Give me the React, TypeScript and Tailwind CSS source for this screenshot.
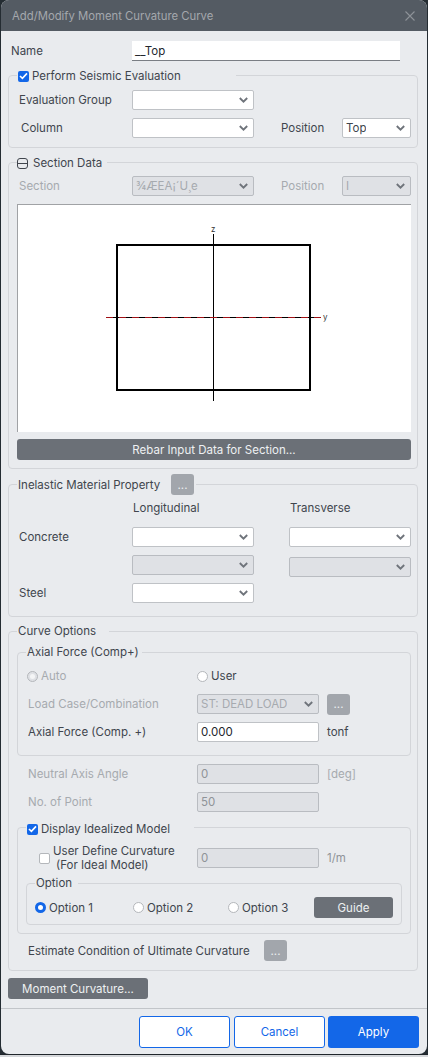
import React from "react";

const Chevron = () => (
  <svg width="9" height="6" viewBox="0 0 9 6" className="shrink-0">
    <path d="M0.8 1 L4.5 4.6 L8.2 1" fill="none" stroke="#6f747b" strokeWidth="1.9" />
  </svg>
);

function Select({ w = "w-[122px]", value = "", disabled = false }: { w?: string; value?: string; disabled?: boolean }) {
  return (
    <div
      className={`${w} h-[20px] shrink-0 flex items-center justify-between pl-[3px] pr-[5px] rounded-[2px] border ${
        disabled ? "bg-[#dfe1e5] border-[#b9bcc1] text-[#a6aaaf]" : "bg-white border-[#bfc2c6] text-[#40454d]"
      }`}
    >
      <span className="whitespace-nowrap overflow-hidden">{value}</span>
      <Chevron />
    </div>
  );
}

function Input({ value, disabled = false }: { value: string; disabled?: boolean }) {
  return (
    <div
      className={`w-[122px] h-[20px] shrink-0 flex items-center pl-[3px] rounded-[2px] border ${
        disabled ? "bg-[#dfe1e5] border-[#b9bcc1] text-[#8f9398]" : "bg-white border-[#bfc2c6] text-[#23272d]"
      }`}
    >
      {value}
    </div>
  );
}

const Check = ({ on = true }: { on?: boolean }) =>
  on ? (
    <span className="w-[11px] h-[11px] shrink-0 rounded-[2px] bg-[#1367e8] flex items-center justify-center">
      <svg width="9" height="8" viewBox="0 0 9 8">
        <path d="M1 4 L3.4 6.4 L8 1.4" fill="none" stroke="white" strokeWidth="1.6" />
      </svg>
    </span>
  ) : (
    <span className="w-[11px] h-[11px] shrink-0 rounded-[2px] bg-white border border-[#b4b7bb]" />
  );

const Radio = ({ state = "off" }: { state?: "off" | "on" | "disabled" }) => {
  if (state === "on")
    return <span className="w-[11px] h-[11px] shrink-0 rounded-full bg-white border-[3px] border-[#1367e8]" />;
  if (state === "disabled")
    return (
      <span className="w-[11px] h-[11px] shrink-0 rounded-full bg-[#dfe1e5] border border-[#b4b7bb] flex items-center justify-center">
        <span className="w-[5px] h-[5px] rounded-full bg-[#f4f5f6]" />
      </span>
    );
  return <span className="w-[11px] h-[11px] shrink-0 rounded-full bg-white border border-[#b4b7bb]" />;
};

const Dots = ({ cls = "" }: { cls?: string }) => (
  <div className={`w-[23px] h-[21px] shrink-0 rounded-[3px] bg-[#a2a6ac] text-[#eceef0] flex items-center justify-center ${cls}`}>
    ...
  </div>
);

const fs = "m-0 border border-[#d3d5d9] rounded-[4px] min-w-0";

export default function App() {
  return (
    <div className="w-[428px] h-[1057px] overflow-hidden bg-[#242c32] font-['Inter',sans-serif] text-[11.5px] leading-[14px] text-[#40454d]">
      <div className="ml-[1px] w-[426px] h-[1054px] rounded-[8px] overflow-hidden bg-[#e9ebee] flex flex-col">
        {/* title */}
        <div className="h-[31px] shrink-0 bg-[#545b63] flex items-center justify-between pl-[11px] pr-[12px] text-[#a4a8ad] text-[11.3px]">
          <span>Add/Modify Moment Curvature Curve</span>
          <svg width="10" height="10" viewBox="0 0 10 10">
            <path d="M0.5 0.5 L9.5 9.5 M9.5 0.5 L0.5 9.5" stroke="#8d9298" strokeWidth="1.1" />
          </svg>
        </div>

        {/* name */}
        <div className="mt-[10px] pl-[10px] h-[20px] flex items-center">
          <span className="w-[121px]">Name</span>
          <div className="w-[268px] h-[20px] bg-white border-b border-[#7a7e84] pl-[3px] flex items-center text-[#23272d]">
            __Top
          </div>
        </div>

        <div className="pl-[7px]">
          {/* seismic */}
          <fieldset className={`${fs} mt-[7px] w-[410px]`}>
            <legend className="ml-[8px] w-[219px] h-[14px] flex items-center gap-[3px] pl-[1px] pt-[2px]">
              <Check />
              <span>Perform Seismic Evaluation</span>
            </legend>
            <div className="pt-[8px] pb-[9px] pl-[10px] flex flex-col gap-[8px]">
              <div className="h-[20px] flex items-center">
                <span className="w-[113px]">Evaluation Group</span>
                <Select />
              </div>
              <div className="h-[20px] flex items-center">
                <span className="w-[111px] ml-[2px]">Column</span>
                <Select />
                <span className="ml-[27px] w-[61px]">Position</span>
                <Select w="w-[69px]" value="Top" />
              </div>
            </div>
          </fieldset>

          {/* section data */}
          <fieldset className={`${fs} mt-[7px] w-[410px]`}>
            <legend className="ml-[8px] w-[90px] h-[14px] flex items-center gap-[5px] pt-[2px]">
              <span className="w-[11px] h-[11px] shrink-0 rounded-[3px] border border-[#40454d] flex items-center">
                <span className="w-full h-px bg-[#40454d]" />
              </span>
              <span>Section Data</span>
            </legend>
            <div className="pt-[7px] pb-[8px] pl-[8px] w-[402px]">
              <div className="h-[20px] flex items-center pl-[2px] text-[#a6aaaf]">
                <span className="w-[113px]">Section</span>
                <Select disabled value="¾ÆEA¡´U¸e" />
                <span className="ml-[27px] w-[61px]">Position</span>
                <Select disabled w="w-[69px]" value="I" />
              </div>
              <div className="mt-[8px] w-[394px] h-[228px] bg-white border-t border-l border-[#a0a2a5]">
                <svg width="393" height="227" viewBox="18 205 393 227" className="block">
                  <rect x="117" y="245" width="193" height="145" fill="none" stroke="#000" strokeWidth="2" />
                  <line x1="213.5" y1="234" x2="213.5" y2="401" stroke="#000" strokeWidth="1" />
                  <line x1="106" y1="317.5" x2="321" y2="317.5" stroke="#000" strokeWidth="1" />
                  <line x1="106" y1="317.5" x2="321" y2="317.5" stroke="#a01015" strokeWidth="1" strokeDasharray="7 6" />
                  <text x="211" y="232" fontSize="8" fontFamily="Inter, sans-serif" fill="#333">z</text>
                  <text x="323" y="320" fontSize="8" fontFamily="Inter, sans-serif" fill="#333">y</text>
                </svg>
              </div>
              <div className="mt-[7px] w-[394px] h-[21px] rounded-[3px] bg-[#6b7077] text-[#eef0f2] flex items-center justify-center">
                Rebar Input Data for Section...
              </div>
            </div>
          </fieldset>

          {/* inelastic */}
          <fieldset className={`${fs} mt-[5px] w-[410px]`}>
            <legend className="ml-[8px] w-[179px] h-[21px] flex items-center justify-between pl-[1px] pr-[2px]">
              <span>Inelastic Material Property</span>
              <Dots />
            </legend>
            <div className="pt-[6px] pb-[13px] pl-[10px] flex flex-col">
              <div className="h-[14px] flex items-center">
                <span className="ml-[114px] w-[157px]">Longitudinal</span>
                <span>Transverse</span>
              </div>
              <div className="mt-[12px] h-[20px] flex items-center">
                <span className="w-[113px]">Concrete</span>
                <Select />
                <div className="ml-[35px]"><Select /></div>
              </div>
              <div className="mt-[8px] h-[20px] flex items-start">
                <span className="w-[113px]" />
                <Select disabled />
                <div className="ml-[35px] mt-[2px]"><Select disabled /></div>
              </div>
              <div className="mt-[8px] h-[20px] flex items-center">
                <span className="w-[113px]">Steel</span>
                <Select />
              </div>
            </div>
          </fieldset>

          {/* curve options */}
          <fieldset className={`${fs} mt-[7px] w-[410px]`}>
            <legend className="ml-[8px] w-[92px] h-[14px] flex items-center pl-[1px]">Curve Options</legend>
            <div className="pl-[8px] pt-[7px] pb-[9px] w-[402px]">
              <fieldset className={`${fs} w-[394px]`}>
                <legend className="ml-[8px] w-[116px] h-[14px] flex items-center pl-[1px] whitespace-nowrap">Axial Force (Comp+)</legend>
                <div className="pt-[7px] pb-[13px] pl-[10px] flex flex-col gap-[8px]">
                  <div className="h-[20px] flex items-center">
                    <div className="w-[170px] -ml-[1px] flex items-center gap-[3px] text-[#a6aaaf]">
                      <Radio state="disabled" />
                      <span>Auto</span>
                    </div>
                    <Radio />
                    <span className="ml-[3px]">User</span>
                  </div>
                  <div className="h-[20px] flex items-center">
                    <span className="w-[169px] text-[#a6aaaf]">Load Case/Combination</span>
                    <Select w="w-[122px]" disabled value="ST: DEAD LOAD" />
                    <Dots cls="ml-[8px] text-[#c2c5c9]" />
                  </div>
                  <div className="h-[20px] flex items-center">
                    <span className="w-[169px]">Axial Force (Comp. +)</span>
                    <Input value="0.000" />
                    <span className="ml-[8px]">tonf</span>
                  </div>
                </div>
              </fieldset>

              <div className="pl-[11px] text-[#a6aaaf]">
                <div className="mt-[8px] h-[20px] flex items-center">
                  <span className="w-[169px]">Neutral Axis Angle</span>
                  <Input disabled value="0" />
                  <span className="ml-[8px]">[deg]</span>
                </div>
                <div className="mt-[8px] h-[20px] flex items-center">
                  <span className="w-[169px]">No. of Point</span>
                  <Input disabled value="50" />
                </div>
              </div>

              <fieldset className={`${fs} mt-[8px] w-[394px]`}>
                <legend className="ml-[8px] w-[168px] h-[14px] flex items-center gap-[3px] pl-[1px] pt-[4px]">
                  <Check />
                  <span>Display Idealized Model</span>
                </legend>
                <div className="pt-[10px] pb-[8px]">
                  <div className="h-[28px] flex items-center pl-[21px]">
                    <Check on={false} />
                    <div className="ml-[3px] w-[144px] leading-[14px]">
                      <div>User Define Curvature</div>
                      <div className="pl-[3px]">(For Ideal Model)</div>
                    </div>
                    <Input disabled value="0" />
                    <span className="ml-[8px] text-[#8f9398]">1/m</span>
                  </div>
                  <fieldset className={`${fs} mt-[4px] ml-[8px] w-[376px]`}>
                    <legend className="ml-[8px] w-[43px] h-[14px] flex items-center pl-[1px]">Option</legend>
                    <div className="pt-[7px] pb-[6px] pl-[8px] h-[34px] flex items-center">
                      <div className="w-[98px] flex items-center gap-[3px]"><Radio state="on" /><span>Option 1</span></div>
                      <div className="w-[95px] flex items-center gap-[3px]"><Radio /><span>Option 2</span></div>
                      <div className="w-[86px] flex items-center gap-[3px]"><Radio /><span>Option 3</span></div>
                      <div className="w-[79px] h-[21px] rounded-[3px] bg-[#6b7077] text-[#eef0f2] flex items-center justify-center">Guide</div>
                    </div>
                  </fieldset>
                </div>
              </fieldset>

              <div className="mt-[6px] pl-[11px] h-[21px] flex items-center">
                <span className="w-[236px]">Estimate Condition of Ultimate Curvature</span>
                <Dots />
              </div>
            </div>
          </fieldset>

          <div className="mt-[7px] w-[140px] h-[21px] rounded-[3px] bg-[#6b7077] text-[#eef0f2] flex items-center justify-center">
            Moment Curvature...
          </div>
        </div>

        {/* footer */}
        <div className="mt-[9px] border-t border-[#c2c5c9] pt-[7px] flex justify-end gap-[3px] pr-[8px]">
          <div className="mr-[1px] w-[91px] h-[32px] rounded-[3px] bg-white border border-[#1367e8] text-[#1367e8] flex items-center justify-center">OK</div>
          <div className="w-[91px] h-[32px] rounded-[3px] bg-white border border-[#1367e8] text-[#1367e8] flex items-center justify-center">Cancel</div>
          <div className="w-[91px] h-[32px] rounded-[3px] bg-[#1367e8] text-white flex items-center justify-center">Apply</div>
        </div>
      </div>
      <div className="h-[3px] bg-[#d5d7da] border-t border-[#20262b]" />
    </div>
  );
}
